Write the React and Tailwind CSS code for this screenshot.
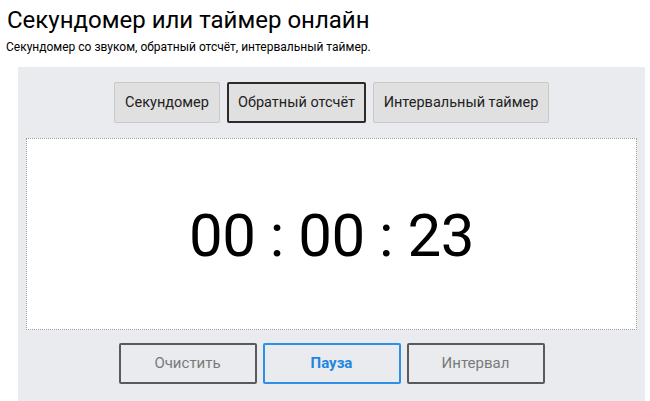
import React, { useState } from 'react'
import clsx from 'clsx'

const MODES = [
  { label: 'Секундомер', w: 'w-[106px]' },
  { label: 'Обратный отсчёт', w: 'w-[139px]' },
  { label: 'Интервальный таймер', w: 'w-[176px]' },
]

export default function App() {
  const [mode, setMode] = useState(1)

  return (
    <div className="h-[401px] w-[650px] overflow-hidden bg-white font-['Roboto',sans-serif] text-black">
      <h1 className="pl-[7px] pt-[4px] text-[24px] leading-[32px]">Секундомер или таймер онлайн</h1>
      <p className="mt-[3px] pl-[6px] text-[12px] leading-[16px]">
        Секундомер со звуком, обратный отсчёт, интервальный таймер.
      </p>

      <div className="ml-[18px] mr-[5px] mt-[12px] bg-[#e9ebee] px-[8px] pb-[30px] pt-[15px]">
        <div className="flex justify-center gap-[7px]">
          {MODES.map((m, i) => (
            <button
              key={m.label}
              onClick={() => setMode(i)}
              className={clsx(
                'h-[41px] rounded-[2px] border bg-[#e0e0e0] text-[14.5px] text-[#222]',
                m.w,
                mode === i ? 'border-2 border-[#2b2b2b]' : 'border-[#c9c9c9]'
              )}
            >
              {m.label}
            </button>
          ))}
        </div>

        <div className="mt-[15px] flex h-[192px] items-center justify-center border border-dotted border-[#9a9a9a] bg-white">
          <span className="pt-[3px] text-[60px] leading-none tracking-[-0.5px]">00 : 00 : 23</span>
        </div>

        <div className="mt-[13px] flex justify-center gap-[6px]">
          <button className="h-[41px] w-[138px] rounded-[2px] border-2 border-[#5a5a5a] bg-[#e9ebee] text-[15px] text-[#7a7a7a]">
            Очистить
          </button>
          <button className="h-[41px] w-[138px] rounded-[2px] border-2 border-[#2f8fe6] bg-[#e9ebee] text-[15px] font-bold text-[#1f86e0]">
            Пауза
          </button>
          <button className="h-[41px] w-[138px] rounded-[2px] border-2 border-[#5a5a5a] bg-[#e9ebee] text-[15px] text-[#7a7a7a]">
            Интервал
          </button>
        </div>
      </div>
    </div>
  )
}
